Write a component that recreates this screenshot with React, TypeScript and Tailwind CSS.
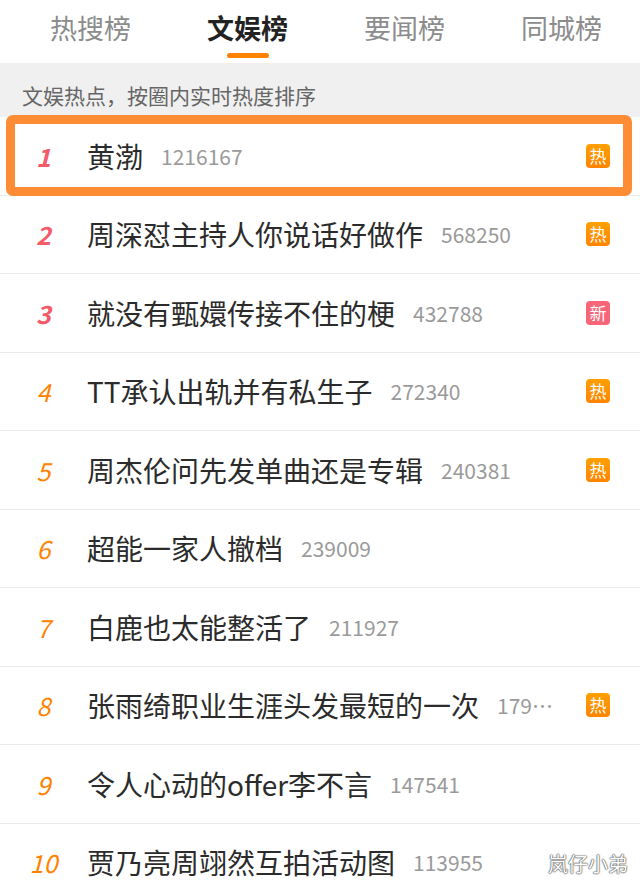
import React from 'react';

// --- データ ---
const TABS = ['热搜榜', '文娱榜', '要闻榜', '同城榜'];
const ACTIVE_TAB = 1;

type Badge = '热' | '新' | null;

const ITEMS: { title: string; heat: string; badge: Badge }[] = [
  { title: '黄渤', heat: '1216167', badge: '热' },
  { title: '周深怼主持人你说话好做作', heat: '568250', badge: '热' },
  { title: '就没有甄嬛传接不住的梗', heat: '432788', badge: '新' },
  { title: 'TT承认出轨并有私生子', heat: '272340', badge: '热' },
  { title: '周杰伦问先发单曲还是专辑', heat: '240381', badge: '热' },
  { title: '超能一家人撤档', heat: '239009', badge: null },
  { title: '白鹿也太能整活了', heat: '211927', badge: null },
  { title: '张雨绮职业生涯头发最短的一次', heat: '179421', badge: '热' },
  { title: '令人心动的offer李不言', heat: '147541', badge: null },
  { title: '贾乃亮周翊然互拍活动图', heat: '113955', badge: null },
];

const FONT = "font-['Noto_Sans_CJK_SC','Noto_Sans',sans-serif]";

const RankBadge = ({ type }: { type: Badge }) => {
  if (!type) return null;
  const bg = type === '新' ? 'bg-[#f96578]' : 'bg-gradient-to-b from-[#ffa000] to-[#ff8400]';
  return (
    <span className={`shrink-0 ml-[27px] w-[24px] h-[24px] rounded-[4px] ${bg} text-white text-[17px] leading-[24px] text-center`}>
      {type}
    </span>
  );
};

const Row = ({ index, item }: { index: number; item: typeof ITEMS[number] }) => {
  const top3 = index < 3;
  return (
    <div className="h-[78.5px] flex items-center pr-[30px] border-b border-[#ebebeb]">
      <span
        className={`w-[87px] shrink-0 text-center italic text-[25px] leading-[30px] ${
          top3 ? 'font-bold text-[#f45a68]' : 'text-[#ff8200]'
        }`}
      >
        {index + 1}
      </span>
      <span className="shrink-0 text-[28px] leading-[36px] text-[#2b2b2b] whitespace-nowrap">{item.title}</span>
      <span className="flex-1 min-w-0 ml-[18px] text-[21px] leading-[30px] text-[#9a9a9a] truncate">{item.heat}</span>
      <RankBadge type={item.badge} />
    </div>
  );
};

export default function App() {
  return (
    <div className={`w-[640px] h-[894px] overflow-hidden bg-white relative ${FONT}`}>
      {/* タブ */}
      <header className="h-[63px] flex pl-[12px]">
        {TABS.map((tab, i) => (
          <div key={tab} className="w-[157px] flex flex-col items-center pt-[11px]">
            <span
              className={`text-[27px] leading-[34px] ${
                i === ACTIVE_TAB ? 'font-bold text-[#222]' : 'text-[#8c8c8c]'
              }`}
            >
              {tab}
            </span>
            <span
              className={`mt-[8px] w-[42px] h-[5px] rounded-full ${
                i === ACTIVE_TAB ? 'bg-[#ff8200]' : 'bg-transparent'
              }`}
            />
          </div>
        ))}
      </header>

      <div className="h-[54px] bg-[#f0f0f0] pl-[22px] pt-[19px] text-[21px] leading-[26px] text-[#666]">
        文娱热点，按圈内实时热度排序
      </div>

      {/* リスト */}
      <div>
        {ITEMS.map((item, i) => (
          <div key={i} className="relative">
            <Row index={i} item={item} />
            {i === 0 && (
              <div className="absolute left-[6px] right-[8px] top-[-2px] bottom-[0px] border-[9px] border-[#fe8c35] rounded-[7px] pointer-events-none" />
            )}
          </div>
        ))}
      </div>

      <span className="absolute right-[12px] bottom-[20px] text-[20px] leading-none text-white [text-shadow:0_0_1px_#444,0_0_2px_#666,0_0_1px_#444]">
        岚仔小弟
      </span>
    </div>
  );
}
